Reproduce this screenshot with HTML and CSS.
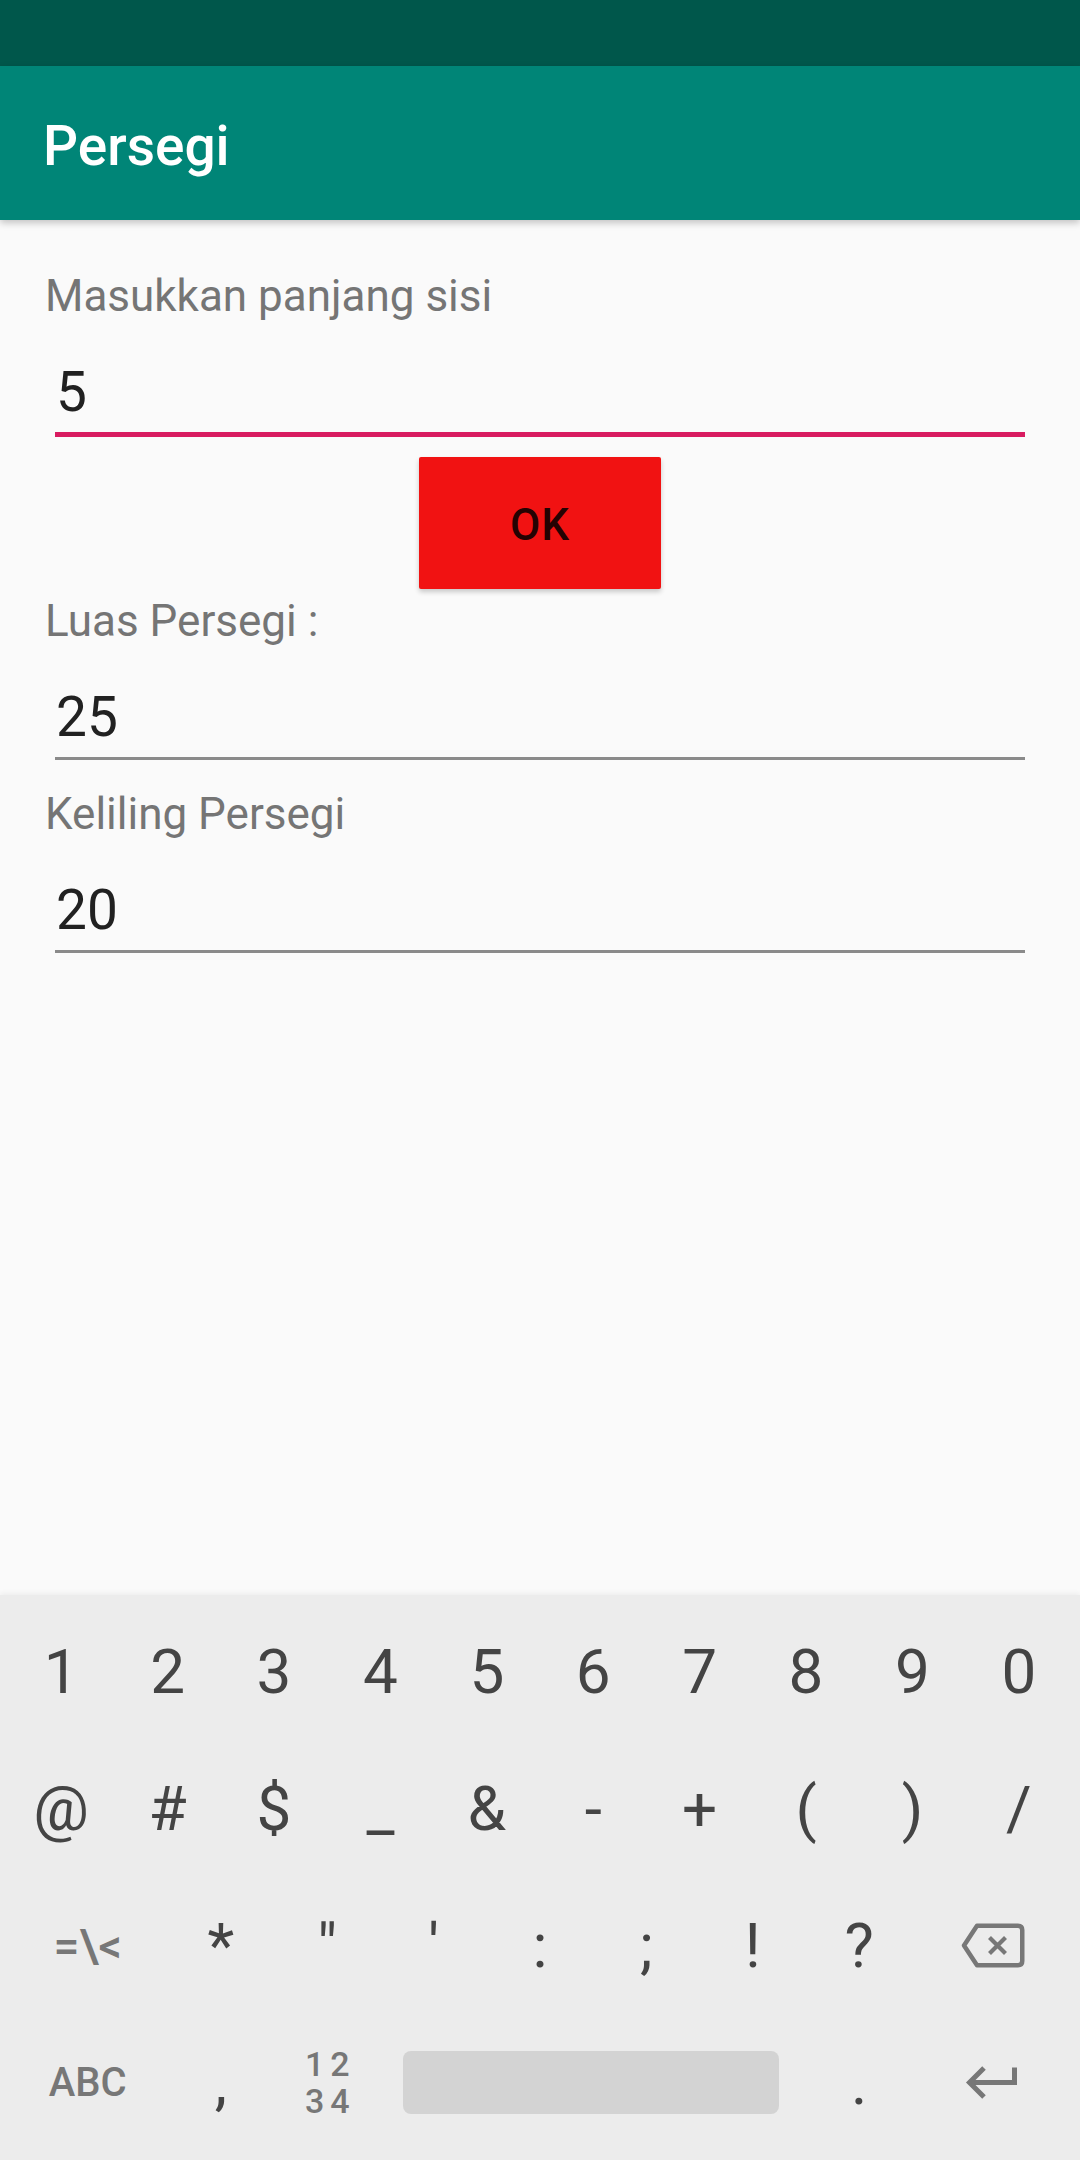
FILE: index.html
```html
<!DOCTYPE html>
<html lang="id">
<head>
<meta charset="utf-8">
<title>Persegi</title>
<link rel="stylesheet" href="styles.css">
</head>
<body>
<div class="screen">
  <div class="statusbar"></div>
  <header class="appbar"><h1 class="title">Persegi</h1></header>
  <main class="content">
    <div class="field">
      <div class="label">Masukkan panjang sisi</div>
      <div class="value">5</div>
      <div class="line line-focus"></div>
    </div>
    <div class="btn-row"><button class="btn-ok">OK</button></div>
    <div class="field field-after-btn">
      <div class="label">Luas Persegi :</div>
      <div class="value">25</div>
      <div class="line"></div>
    </div>
    <div class="field field-next">
      <div class="label">Keliling Persegi</div>
      <div class="value">20</div>
      <div class="line"></div>
    </div>
  </main>
  <section class="keyboard">
    <div class="krow">
      <span class="key">1</span><span class="key">2</span><span class="key">3</span><span class="key">4</span><span class="key">5</span><span class="key">6</span><span class="key">7</span><span class="key">8</span><span class="key">9</span><span class="key">0</span>
    </div>
    <div class="krow">
      <span class="key">@</span><span class="key">#</span><span class="key">$</span><span class="key">_</span><span class="key">&amp;</span><span class="key">-</span><span class="key">+</span><span class="key">(</span><span class="key">)</span><span class="key">/</span>
    </div>
    <div class="krow">
      <span class="key key-wide key-func key-sym">=\&lt;</span><span class="key">*</span><span class="key">"</span><span class="key">'</span><span class="key">:</span><span class="key">;</span><span class="key">!</span><span class="key">?</span>
      <span class="key key-wide">
        <svg class="ico" width="66" height="48" viewBox="0 0 66 48" fill="none" stroke="#777777" stroke-width="4.5" stroke-linejoin="round">
          <path d="M18 3.75 H59 Q63.25 3.75 63.25 8 V39 Q63.25 43.25 59 43.25 H18 L5 23.5 Z"/>
          <path d="M30.5 15.5 L46.5 31.5 M46.5 15.5 L30.5 31.5" stroke-width="4.2"/>
        </svg>
      </span>
    </div>
    <div class="krow">
      <span class="key key-wide key-func key-abc">ABC</span>
      <span class="key">,</span>
      <span class="key key-func key-num"><span>12</span><span>34</span></span>
      <span class="key key-space"><span class="spacebar"></span></span>
      <span class="key">.</span>
      <span class="key key-wide">
        <svg class="ico" width="56" height="34" viewBox="0 0 56 34" fill="none" stroke="#777777" stroke-width="5" stroke-linejoin="miter">
          <path d="M50.5 1.5 V16.5 H5"/>
          <path d="M20 2 L5.5 16.5 L20 31"/>
        </svg>
      </span>
    </div>
  </section>
</div>
</body>
</html>
```

FILE: styles.css
```css
* { box-sizing: border-box; }

html, body {
  margin: 0;
  padding: 0;
  background: #fafafa;
}

body {
  font-family: Roboto, "Noto Sans", "Liberation Sans", sans-serif;
}

.screen {
  width: 1080px;
  height: 2160px;
  display: flex;
  flex-direction: column;
  overflow: hidden;
}

.statusbar {
  height: 66px;
  background: #00574b;
  flex: none;
}

.appbar {
  height: 154px;
  flex: none;
  background: #008577;
  display: flex;
  align-items: center;
  padding: 6px 0 0 43px;
  box-shadow: 0 3px 7px rgba(0, 0, 0, 0.22);
  position: relative;
  z-index: 2;
}

.title {
  margin: 0;
  color: #ffffff;
  font-size: 55px;
  font-weight: 500;
  line-height: 64px;
}

.content {
  flex: 1;
  padding: 50px 44px 0;
}

.label {
  font-size: 44px;
  line-height: 52px;
  color: #757575;
  padding-left: 1px;
}

.value {
  padding: 38px 11px 0 12px;
  font-size: 55px;
  line-height: 64px;
  color: #212121;
}

.line {
  margin: 8px 11px 0;
  height: 3px;
  background: #8a8a8a;
}

.line-focus {
  height: 5px;
  background: #d81b60;
}

.btn-row {
  display: flex;
  justify-content: center;
  margin-top: 20px;
}

.btn-ok {
  width: 242px;
  height: 132px;
  border: 0;
  border-radius: 2px;
  background: #f11212;
  color: rgba(0, 0, 0, 0.87);
  font-family: Roboto, "Noto Sans", sans-serif;
  font-size: 44px;
  font-weight: 500;
  letter-spacing: 1px;
  box-shadow: 0 3px 5px rgba(0, 0, 0, 0.2);
  padding: 4px 0 0;
}

.field-after-btn { margin-top: 6px; }
.field-next { margin-top: 28px; }

.keyboard {
  flex: none;
  height: 565px;
  background: #ececec;
  padding: 8px 8px 0;
  box-shadow: 0 -2px 5px rgba(0, 0, 0, 0.05);
  position: relative;
}

.krow {
  height: 137px;
  display: flex;
}

.key {
  flex: 1 1 0;
  min-width: 0;
  display: flex;
  align-items: center;
  justify-content: center;
  font-size: 62px;
  color: #444444;
}

.key-wide { flex: 1.5 1 0; }

.key-func {
  color: #777777;
  font-weight: 500;
  font-size: 42px;
}

.key-sym { font-size: 46px; }

.key-abc { font-size: 40px; }

.key-num {
  flex-direction: column;
  font-size: 34px;
  line-height: 37px;
  letter-spacing: 6px;
}

.key-num span { padding-left: 6px; }

.key-space { flex: 4 1 0; }

.spacebar {
  flex: 1;
  margin: 0 27px 0 23px;
  height: 63px;
  background: #d3d3d3;
  border-radius: 8px;
}

.ico { display: block; }
```
